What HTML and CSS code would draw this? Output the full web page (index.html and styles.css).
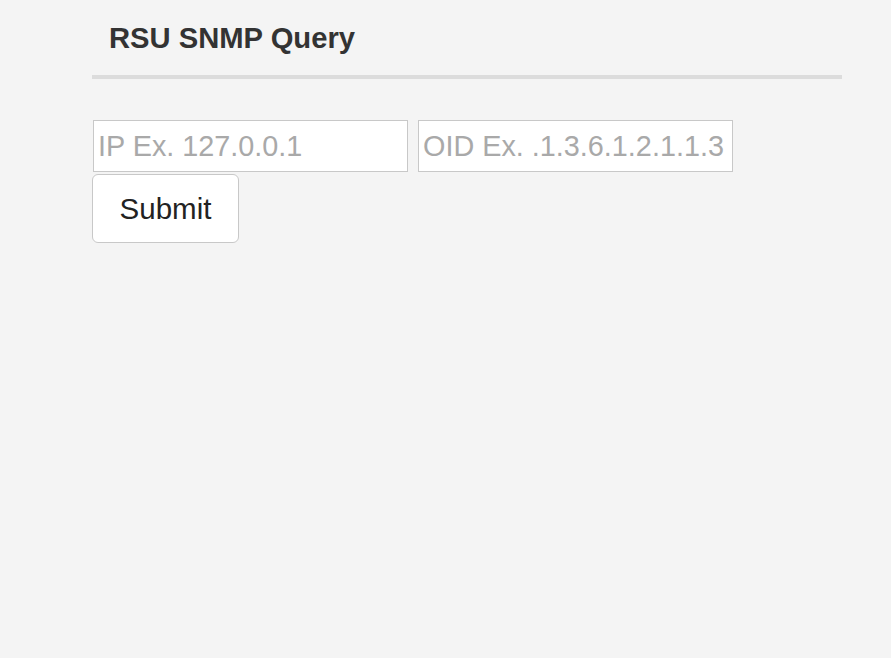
FILE: index.html
```html
<!DOCTYPE html>
<html>
<head>
<meta charset="utf-8">
<title>RSU SNMP Query</title>
<link rel="stylesheet" href="styles.css">
</head>
<body>
<div class="page">
  <div class="header">
    <h1 class="title">RSU SNMP Query</h1>
  </div>
  <form class="query-form" onsubmit="return false;">
    <div class="fields">
      <input class="field" type="text" placeholder="IP Ex. 127.0.0.1">
      <input class="field" type="text" placeholder="OID Ex. .1.3.6.1.2.1.1.3">
    </div>
    <button class="submit" type="submit">Submit</button>
  </form>
</div>
</body>
</html>
```

FILE: styles.css
```css
html, body {
  margin: 0;
  padding: 0;
  background: #f4f4f4;
}
body {
  font-family: "Liberation Sans", Arial, sans-serif;
  color: #333;
}
.page {
  width: 750px;
  margin-left: 92px;
  display: flex;
  flex-direction: column;
}
.header {
  padding: 21px 0 20px 17px;
  border-bottom: 4px solid #dcdcdc;
}
.title {
  margin: 0;
  font-size: 29.2px;
  line-height: 34px;
  font-weight: bold;
  color: #333;
}
.query-form {
  margin-top: 41px;
  display: flex;
  flex-direction: column;
  align-items: flex-start;
}
.fields {
  display: flex;
  gap: 10px;
  padding-left: 1px;
}
.field {
  box-sizing: border-box;
  width: 315px;
  height: 52px;
  margin: 0;
  padding: 0 4px;
  border: 1px solid #c8c8c8;
  border-radius: 0;
  background: #fff;
  font-family: "Liberation Sans", Arial, sans-serif;
  font-size: 28.8px;
  color: #333;
  outline: none;
}
.field::placeholder {
  color: #a9a9a9;
  opacity: 1;
}
.submit {
  box-sizing: border-box;
  margin-top: 2px;
  width: 147px;
  height: 69px;
  padding: 0;
  border: 1px solid #c8c8c8;
  border-radius: 6px;
  background: #fff;
  font-family: "Liberation Sans", Arial, sans-serif;
  font-size: 29.5px;
  color: #222;
  cursor: pointer;
}
```
